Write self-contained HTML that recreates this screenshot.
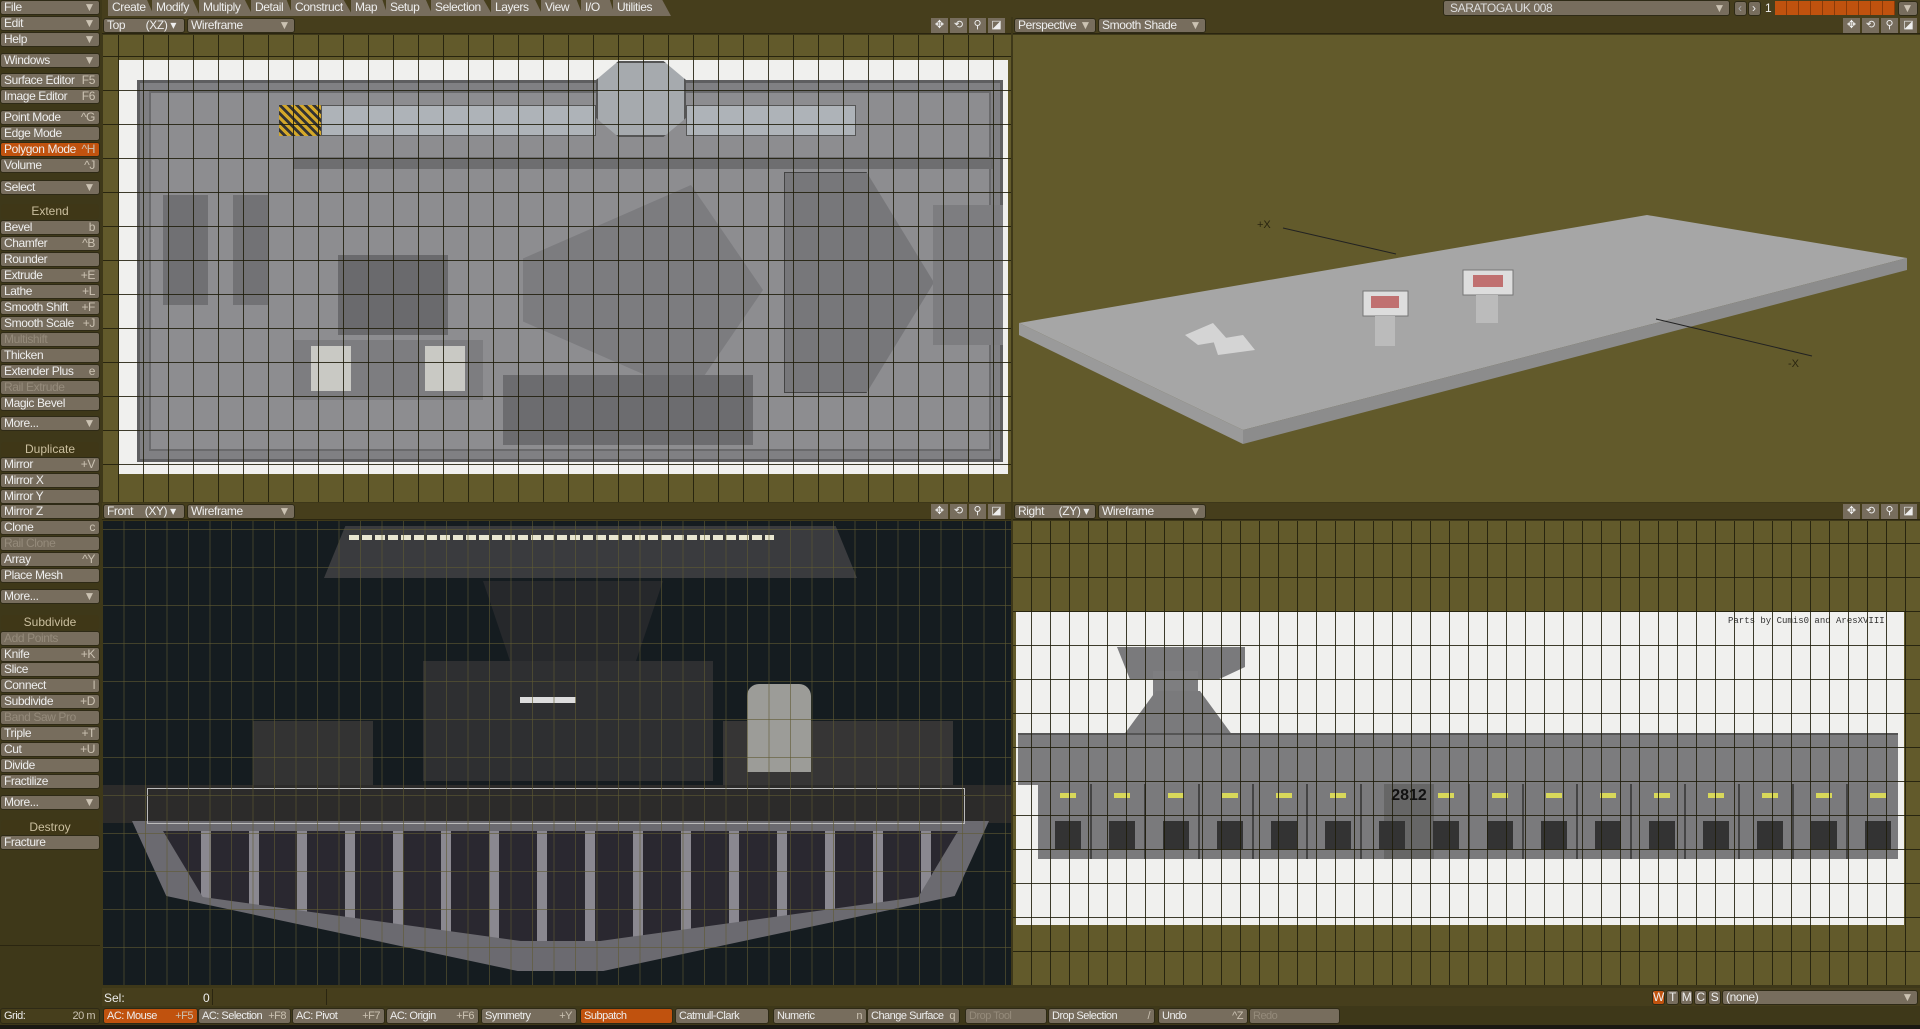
<!DOCTYPE html>
<html><head><meta charset="utf-8"><style>
*{margin:0;padding:0;box-sizing:border-box}
body{width:1920px;height:1029px;background:#3e3819;position:relative;overflow:hidden;font-family:"Liberation Sans",sans-serif;font-size:12px;color:#eee}
.a{position:absolute}
.b{position:absolute;height:15px;background:#776d5d;border:1px solid #2e2a16;border-radius:3px;line-height:13px;padding-left:3px;white-space:nowrap;letter-spacing:-0.4px}
.b i{position:absolute;right:4px;top:0;font-style:normal;color:#cbc2b2}
.o{background:#c0520e}
.d{color:#958b7b}
.h{position:absolute;height:15px;background:#3f3717;color:#cbbf9f;text-align:center;line-height:14px;border-radius:3px}
.tab{position:absolute;top:0;height:16px;background:#776d5d;line-height:15px;padding-left:4px;clip-path:polygon(0 0,85% 0,100% 100%,0 100%);letter-spacing:-0.4px}
.vh{position:absolute;height:17px;background:#463e1c;border-bottom:1px solid #2a2510}
.ic{position:absolute;width:17px;height:15px;background:#776d5d;color:#eee;font-size:11px;text-align:center;line-height:15px}
.g{background-color:#625a2b}
.bb{font-size:11px;letter-spacing:-0.5px}
</style></head><body>
<div class="a" style="left:102px;top:0;width:1818px;height:17px;background:#463e1c"></div>
<div class="tab" style="left:108px;width:46px">Create</div>
<div class="tab" style="left:152px;width:48px">Modify</div>
<div class="tab o" style="left:199px;width:54px">Multiply</div>
<div class="tab" style="left:251px;width:42px">Detail</div>
<div class="tab" style="left:291px;width:62px">Construct</div>
<div class="tab" style="left:351px;width:37px">Map</div>
<div class="tab" style="left:386px;width:47px">Setup</div>
<div class="tab" style="left:431px;width:62px">Selection</div>
<div class="tab" style="left:491px;width:52px">Layers</div>
<div class="tab" style="left:541px;width:42px">View</div>
<div class="tab" style="left:581px;width:34px">I/O</div>
<div class="tab" style="left:613px;width:58px">Utilities</div>
<div class="b" style="left:1443px;top:0;width:287px;height:16px;padding-left:6px;line-height:14px;color:#ddd">SARATOGA UK 008<i>▼</i></div>
<div class="b" style="left:1734px;top:1px;width:13px;color:#aaa">‹</div>
<div class="b" style="left:1748px;top:1px;width:13px">›</div>
<div class="a" style="left:1765px;top:1px">1</div>
<div class="a" style="left:1775px;top:1px;width:120px;height:14px;background:repeating-linear-gradient(90deg,#c0520e 0 11px,#8a3a08 11px 12px)"></div>
<div class="b" style="left:1898px;top:1px;width:20px"><i>▼</i></div>

<div id="lp"></div>
<div class="a" style="left:0;top:945px;width:100px;height:1px;background:#2a2510"></div>

<div class="vh" style="left:102px;top:17px;width:909px"></div>
<div class="vh" style="left:1013px;top:17px;width:907px"></div>
<div class="vh" style="left:102px;top:503px;width:909px"></div>
<div class="vh" style="left:1013px;top:503px;width:907px"></div>
<div class="b" style="left:103px;top:18px;width:82px">Top&nbsp;&nbsp;&nbsp;&nbsp;&nbsp;&nbsp;&nbsp;(XZ) ▾</div>
<div class="b" style="left:187px;top:18px;width:108px">Wireframe<i>▼</i></div>
<div class="b" style="left:1014px;top:18px;width:82px">Perspective<i>▼</i></div>
<div class="b" style="left:1098px;top:18px;width:108px">Smooth Shade<i>▼</i></div>
<div class="b" style="left:103px;top:504px;width:82px">Front&nbsp;&nbsp;&nbsp;&nbsp;(XY) ▾</div>
<div class="b" style="left:187px;top:504px;width:108px">Wireframe<i>▼</i></div>
<div class="b" style="left:1014px;top:504px;width:82px">Right&nbsp;&nbsp;&nbsp;&nbsp;&nbsp;(ZY) ▾</div>
<div class="b" style="left:1098px;top:504px;width:108px">Wireframe<i>▼</i></div>
<div id="icons"></div>

<!-- Top viewport -->
<div class="a g" style="left:103px;top:35px;width:908px;height:467px;overflow:hidden">
 <div class="a" style="left:16px;top:25px;width:889px;height:414px;background:#f0f0ee"></div>
 <div class="a" style="left:34px;top:45px;width:866px;height:382px;background:#808083;border:3px solid #5e5e60"></div>
 <div class="a" style="left:46px;top:56px;width:842px;height:360px;background:#8d8d90;border:2px solid #6a6a6c"></div>
 <div class="a" style="left:176px;top:70px;width:42px;height:31px;background:repeating-linear-gradient(45deg,#d4a82a 0 3px,#333 3px 6px)"></div>
 <div class="a" style="left:218px;top:70px;width:275px;height:31px;background:#aeb3b8;border:1px solid #555"></div>
 <div class="a" style="left:583px;top:70px;width:170px;height:31px;background:#aeb3b8;border:1px solid #555"></div>
 <div class="a" style="left:493px;top:26px;width:90px;height:76px;background:#a6aaae;border:2px solid #555;clip-path:polygon(25% 0,75% 0,100% 25%,100% 75%,75% 100%,25% 100%,0 75%,0 25%)"></div>
 <div class="a" style="left:190px;top:122px;width:700px;height:12px;background:#6e6e70"></div>
 <div class="a" style="left:420px;top:150px;width:240px;height:210px;background:#7c7c7f;clip-path:polygon(0 35%,70% 0,100% 50%,70% 100%,0 65%)"></div>
 <div class="a" style="left:681px;top:137px;width:150px;height:221px;background:#77777a;border:1px solid #444;clip-path:polygon(0 0,55% 0,100% 50%,55% 100%,0 100%)"></div>
 <div class="a" style="left:830px;top:170px;width:70px;height:140px;background:#7d7d80"></div>
 <div class="a" style="left:60px;top:160px;width:45px;height:110px;background:#707073"></div>
 <div class="a" style="left:130px;top:160px;width:35px;height:110px;background:#727275"></div>
 <div class="a" style="left:235px;top:220px;width:110px;height:80px;background:#6a6a6d"></div>
 <div class="a" style="left:190px;top:305px;width:190px;height:60px;background:#7d7d80"></div>
 <div class="a" style="left:208px;top:311px;width:40px;height:45px;background:#c9c9c4"></div>
 <div class="a" style="left:322px;top:311px;width:40px;height:45px;background:#c9c9c4"></div>
 <div class="a" style="left:400px;top:340px;width:250px;height:70px;background:#6c6c6f"></div>
 <div class="a" style="left:0;top:0;width:908px;height:467px;background-image:repeating-linear-gradient(90deg,transparent 0 24px,rgba(30,28,10,.85) 24px 25px),repeating-linear-gradient(0deg,transparent 0 33px,rgba(30,28,10,.85) 33px 34px);background-position:-9px 0,0 -4px"></div>
</div>

<!-- Perspective viewport -->
<div class="a g" style="left:1013px;top:35px;width:907px;height:467px;overflow:hidden">
 <svg width="907" height="467" class="a" style="left:0;top:0">
  <line x1="270" y1="193" x2="383" y2="219" stroke="#222"/>
  <text x="244" y="193" fill="#2a2510" font-size="11" font-family="Liberation Sans">+X</text>
  <polygon points="6,288 634,180 894,223 230,395" fill="#a6a6a6"/>
  <polygon points="230,395 894,223 894,235 230,409" fill="#8c8c8c"/>
  <polygon points="6,288 230,395 230,409 6,300" fill="#9a9a9a"/>
  <polygon points="172,300 200,288 215,305 185,310" fill="#d4d4d4"/>
  <polygon points="200,305 230,300 242,315 205,320" fill="#d4d4d4"/>
  <rect x="350" y="256" width="45" height="25" fill="#ddd" stroke="#777"/>
  <rect x="450" y="235" width="50" height="25" fill="#ddd" stroke="#777"/>
  <rect x="358" y="261" width="28" height="12" fill="#c07070"/>
  <rect x="460" y="240" width="30" height="12" fill="#c07070"/>
  <rect x="362" y="281" width="20" height="30" fill="#bbb"/>
  <rect x="463" y="260" width="22" height="28" fill="#bbb"/>
  <line x1="643" y1="284" x2="799" y2="321" stroke="#222"/>
  <text x="775" y="332" fill="#2a2510" font-size="11" font-family="Liberation Sans">-X</text>
 </svg>
</div>

<!-- Front viewport -->
<div class="a" style="left:103px;top:521px;width:908px;height:464px;background:#151c20;overflow:hidden">
 <div class="a" style="left:221px;top:5px;width:533px;height:52px;background:#3a3b3e;clip-path:polygon(4% 0,96% 0,100% 100%,0 100%)"></div>
 <div class="a" style="left:246px;top:14px;width:425px;height:5px;background:repeating-linear-gradient(90deg,#e8e6d0 0 10px,#3a3a3a 10px 13px)"></div>
 <div class="a" style="left:380px;top:60px;width:180px;height:160px;background:#26282b;clip-path:polygon(0 0,100% 0,70% 100%,30% 100%)"></div>
 <div class="a" style="left:320px;top:140px;width:290px;height:120px;background:#2e2f31"></div>
 <div class="a" style="left:417px;top:176px;width:56px;height:6px;background:#ddd"></div>
 <div class="a" style="left:150px;top:200px;width:120px;height:70px;background:#333"></div>
 <div class="a" style="left:620px;top:200px;width:230px;height:70px;background:#363535"></div>
 <div class="a" style="left:0;top:264px;width:908px;height:38px;background:#2c2b2a"></div>
 <div class="a" style="left:29px;top:300px;width:857px;height:150px;background:#6b6a70;clip-path:polygon(0 0,100% 0,96% 50%,55% 100%,45% 100%,4% 50%)"></div>
 <div class="a" style="left:60px;top:310px;width:795px;height:110px;background:repeating-linear-gradient(90deg,#2a2830 0 38px,#8a8890 38px 48px);clip-path:polygon(0 0,100% 0,95% 60%,55% 100%,45% 100%,5% 60%)"></div>
 <div class="a" style="left:644px;top:163px;width:64px;height:88px;background:#9c9c98;border-radius:12px 12px 0 0"></div>
 <div class="a" style="left:44px;top:267px;width:818px;height:36px;border:1px solid #bbb"></div>
 <div class="a" style="left:0;top:0;width:908px;height:464px;background-image:repeating-linear-gradient(90deg,transparent 0 20.5px,rgba(95,90,50,.6) 20.5px 21.5px),repeating-linear-gradient(0deg,transparent 0 37px,rgba(95,90,50,.6) 37px 38px)"></div>
</div>

<!-- Right viewport -->
<div class="a g" style="left:1013px;top:521px;width:907px;height:464px;overflow:hidden">
 <div class="a" style="left:3px;top:91px;width:888px;height:313px;background:#f0f0ee"></div>
 <div class="a" style="left:715px;top:95px;font:9px 'Liberation Mono',monospace;color:#333">Parts by Cumis0 and AresXVIII</div>
 <div class="a" style="left:104px;top:118px;width:128px;height:40px;background:#7a7a7c;clip-path:polygon(0 20%,100% 20%,100% 70%,80% 100%,10% 100%)"></div>
 <div class="a" style="left:140px;top:150px;width:45px;height:60px;background:#7e7e80"></div>
 <div class="a" style="left:110px;top:170px;width:110px;height:45px;background:#7a7a7c;clip-path:polygon(30% 0,70% 0,100% 100%,0 100%)"></div>
 <div class="a" style="left:5px;top:212px;width:880px;height:52px;background:#7c7c7e;border-top:2px solid #555"></div>
 <div class="a" style="left:25px;top:263px;width:860px;height:75px;background:repeating-linear-gradient(90deg,#7a7a7c 0 52px,#444 52px 54px)"></div>
 <div class="a" style="left:35px;top:272px;width:850px;height:5px;background:repeating-linear-gradient(90deg,transparent 0 12px,#d8d85a 12px 28px,transparent 28px 54px)"></div>
 <div class="a" style="left:371px;top:263px;width:50px;height:75px;background:#666;color:#111;font-size:16px;font-weight:bold;text-align:center;line-height:24px">2812</div>
 <div class="a" style="left:30px;top:300px;width:850px;height:28px;background:repeating-linear-gradient(90deg,transparent 0 12px,#333 12px 38px,transparent 38px 54px)"></div>
 <div class="a" style="left:0;top:0;width:907px;height:464px;background-image:repeating-linear-gradient(90deg,transparent 0 18px,rgba(30,28,10,.85) 18px 19px),repeating-linear-gradient(0deg,transparent 0 33px,rgba(30,28,10,.85) 33px 34px)"></div>
</div>

<div class="a" style="left:102px;top:988px;width:1818px;height:18px;background:#463e1c"></div>
<div class="a" style="left:104px;top:991px">Sel:</div>
<div class="a" style="left:203px;top:991px">0</div>
<div class="a" style="left:212px;top:989px;width:1px;height:16px;background:#2a2510"></div>
<div class="a" style="left:326px;top:989px;width:1px;height:16px;background:#2a2510"></div>
<div id="bot"></div>
<div class="a" style="left:0;top:1025px;width:1920px;height:4px;background:#1a1812"></div>
<script>
var L=[["File",0,"▼"],["Edit",13,"▼"],["Help",26,"▼"],["Windows",43,"▼"],["Surface Editor",60,"F5"],["Image Editor",73,"F6"],["Point Mode",90,"^G"],["Edge Mode",103,""],["Polygon Mode",116,"^H","o"],["Volume",129,"^J"],["Select",147,"▼"],["#Extend",167],["Bevel",180,"b"],["Chamfer",193,"^B"],["Rounder",206,""],["Extrude",219,"+E"],["Lathe",232,"+L"],["Smooth Shift",245,"+F"],["Smooth Scale",258,"+J"],["Multishift",271,"","d"],["Thicken",284,""],["Extender Plus",297,"e"],["Rail Extrude",310,"","d"],["Magic Bevel",323,""],["More...",340,"▼"],["#Duplicate",361],["Mirror",373,"+V"],["Mirror X",386,""],["Mirror Y",399,""],["Mirror Z",412,""],["Clone",425,"c"],["Rail Clone",438,"","d"],["Array",451,"^Y"],["Place Mesh",464,""],["More...",481,"▼"],["#Subdivide",502],["Add Points",515,"","d"],["Knife",528,"+K"],["Slice",541,""],["Connect",554,"l"],["Subdivide",567,"+D"],["Band Saw Pro",580,"","d"],["Triple",593,"+T"],["Cut",606,"+U"],["Divide",619,""],["Fractilize",632,""],["More...",649,"▼"],["#Destroy",670],["Fracture",682,""]];
var h="";L.forEach(function(r){var y=Math.round(r[1]*1.2245);if(r[0][0]=="#")h+='<div class="h" style="left:1px;top:'+y+'px;width:98px">'+r[0].slice(1)+'</div>';else h+='<div class="b '+(r[3]||"")+'" style="left:0;top:'+y+'px;width:100px">'+r[0]+'<i>'+r[2]+'</i></div>';});
document.getElementById("lp").innerHTML=h;
var B=[["Grid:",0,100,"20 m",""],["AC: Mouse",103,95,"+F5","o"],["AC: Selection",198,93,"+F8",""],["AC: Pivot",292,93,"+F7",""],["AC: Origin",386,93,"+F6",""],["Symmetry",481,96,"+Y",""],["Subpatch",580,93,"","o"],["Catmull-Clark",675,94,"",""],["Numeric",773,94,"n",""],["Change Surface",867,93,"q",""],["Drop Tool",965,82,"","d"],["Drop Selection",1048,107,"/",""],["Undo",1158,90,"^Z",""],["Redo",1249,91,"","d"]];
h="";B.forEach(function(r){h+='<div class="b bb '+r[4]+'" style="left:'+r[1]+'px;top:1008px;width:'+r[2]+'px;height:16px;line-height:14px'+(r[0]=="Grid:"?';background:#463e1c':'')+'">'+r[0]+'<i>'+r[3]+'</i></div>';});
["W","T","M","C","S"].forEach(function(c,i){h+='<div class="b '+(i==0?"o":"")+'" style="left:'+(1652+i*14)+'px;top:990px;width:13px;padding:0;text-align:center">'+c+'</div>';});
h+='<div class="b" style="left:1722px;top:990px;width:196px">(none)<i>▼</i></div>';
document.getElementById("bot").innerHTML=h;
h="";[[931,18],[1843,18],[931,504],[1843,504]].forEach(function(p){["✥","⟲","⚲","◪"].forEach(function(c,i){h+='<div class="ic" style="left:'+(p[0]+i*19)+'px;top:'+p[1]+'px">'+c+'</div>';});});
document.getElementById("icons").innerHTML=h;
</script>
</body></html>
